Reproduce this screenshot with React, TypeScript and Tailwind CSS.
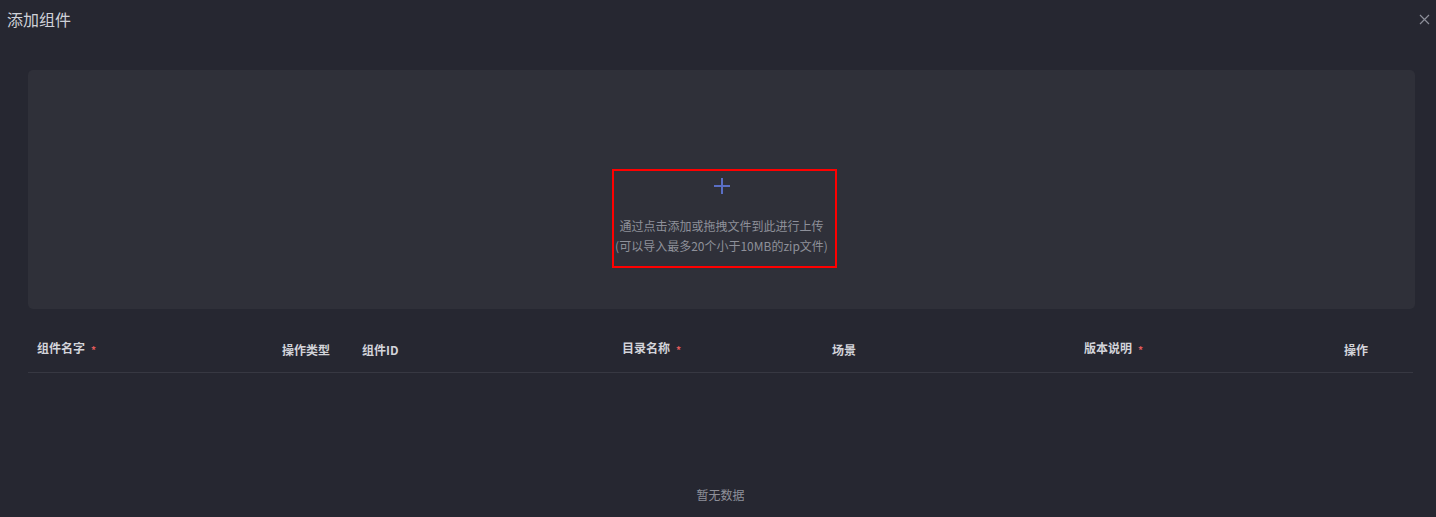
import React from "react";

const font = { fontFamily: '"Noto Sans CJK SC", "Noto Sans", sans-serif' };

function Star() {
  return <span className="ml-[6px] text-[10px] text-[#e05a5a] relative top-[1px]">*</span>;
}

export default function App() {
  const cols: { label: string; req?: boolean }[] = [
    { label: "组件名字", req: true },
    { label: "操作类型" },
    { label: "组件ID" },
    { label: "目录名称", req: true },
    { label: "场景" },
    { label: "版本说明", req: true },
    { label: "操作" },
  ];
  return (
    <div className="w-[1436px] h-[517px] bg-[#262731] overflow-hidden relative" style={font}>
      <div className="flex items-center justify-between h-[38px] pl-[7px] pr-[6px]">
        <span className="text-[16px] text-[#cfd1d8]">添加组件</span>
        <svg width="11" height="11" viewBox="0 0 11 11" className="mt-[1px]">
          <path d="M1 1L10 10M10 1L1 10" stroke="#8c8e99" strokeWidth="1.2" />
        </svg>
      </div>
      <div className="ml-[28px] mr-[21px] mt-[32px] h-[239px] rounded-[5px] bg-[#2f3039] flex justify-center pt-[99px]">
        <div className="w-[225px] h-[99px] border-2 border-[#ff0000] ml-[6px] pr-[6px] flex flex-col items-center">
          <svg width="18" height="18" viewBox="0 0 18 18" className="mt-[6px]">
            <path d="M9 1V17M1 9H17" stroke="#5a6ec4" strokeWidth="2" />
          </svg>
          <div className="mt-[21px] text-[12px] leading-[20px] text-[#8e909a] text-center whitespace-nowrap">
            <div>通过点击添加或拖拽文件到此进行上传</div>
            <div>(可以导入最多20个小于10MB的zip文件)</div>
          </div>
        </div>
      </div>
      <div className="ml-[28px] w-[1385px] mt-[19px]">
        <div className="grid grid-cols-[245px_80px_260px_210px_252px_260px_78px] h-[45px] items-center border-b border-[#373842]">
          {cols.map((c) => (
            <div key={c.label} className={`pl-[9px] text-[12px] font-bold text-[#d3d4da] whitespace-nowrap ${c.req ? "-mt-[4px]" : ""}`}>
              {c.label}
              {c.req && <Star />}
            </div>
          ))}
        </div>
        <div className="h-[144px] flex items-end justify-center pb-[13px]">
          <span className="text-[12px] text-[#8e909a]">暂无数据</span>
        </div>
      </div>
    </div>
  );
}
